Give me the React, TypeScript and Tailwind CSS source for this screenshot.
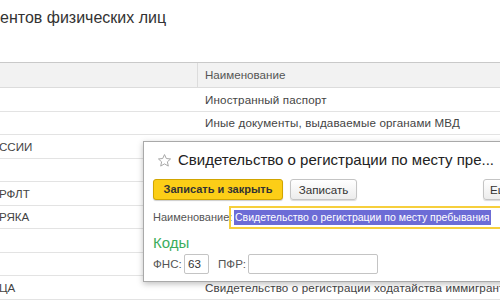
import React from 'react';

const rows = [
  { left: '', right: 'Иностранный паспорт' },
  { left: '', right: 'Иные документы, выдаваемые органами МВД' },
  { left: 'ССИИ', right: '' },
  { left: '', right: '' },
  { left: 'РФЛТ', right: '' },
  { left: 'РЯКА', right: '' },
  { left: '', right: '' },
  { left: '', right: '' },
  { left: 'ЦА', right: 'Свидетельство о регистрации ходатайства иммигранта о при' },
];

const Star = () => (
  <svg width="15" height="15" viewBox="0 0 24 24" fill="none" stroke="#a8a8a8" strokeWidth="1.6" strokeLinejoin="round">
    <path d="M12 2.5l2.9 6.3 6.8.7-5.1 4.6 1.5 6.8L12 17.4l-6.1 3.5 1.5-6.8-5.1-4.6 6.8-.7z" />
  </svg>
);

const App = () => {
  return (
    <div className="relative w-[500px] h-[300px] overflow-hidden bg-white font-['Liberation_Sans',Arial,sans-serif] text-[#333]">
      <h1 className="h-[62px] pt-[8px] text-[16px] leading-[20px] whitespace-nowrap">ентов физических лиц</h1>

      <div className="border-t border-[#c9c9c9]">
        <div className="flex h-[25px] items-center bg-[#f2f2f2] border-b border-[#dcdcdc] text-[11.6px] text-[#555]">
          <div className="w-[198px] shrink-0 h-full border-r border-[#dcdcdc]" />
          <div className="pl-[7px]">Наименование</div>
        </div>
        {rows.map((r, i) => (
          <div key={i} className="flex h-[23.5px] items-center border-b border-[#e3e3e3] text-[11.6px] text-[#444]">
            <span className="w-[198px] shrink-0 -ml-[1px] whitespace-nowrap">{r.left}</span>
            <span className="pl-[8px] shrink-0 whitespace-nowrap tracking-[0.15px]">{r.right}</span>
          </div>
        ))}
      </div>

      <div className="absolute left-[143px] top-[141px] w-[420px] h-[141px] bg-white border border-[#a9a9a9] shadow-[0_2px_6px_rgba(0,0,0,0.25)] px-[9px]">
        <div className="flex items-center h-[37px] gap-[6px] pl-[4px]">
          <Star />
          <span className="text-[15px] text-[#222] whitespace-nowrap">Свидетельство о регистрации по месту пре...</span>
        </div>
        <div className="flex h-[21px] text-[11.6px] text-[#333]">
          <button className="w-[130px] shrink-0 h-[21px] rounded-[3px] bg-[#fcce17] border border-[#d1a500] font-bold text-[11px] shadow-[0_1px_1px_rgba(0,0,0,0.2)]">Записать и закрыть</button>
          <button className="w-[67px] shrink-0 ml-[7px] h-[21px] rounded-[3px] bg-gradient-to-b from-white to-[#ececec] border border-[#c4c4c4] shadow-[0_1px_1px_rgba(0,0,0,0.15)]">Записать</button>
          <button className="w-[60px] shrink-0 ml-[126px] h-[21px] rounded-[3px] bg-gradient-to-b from-white to-[#ececec] border border-[#c4c4c4] text-left pl-[6px] shadow-[0_1px_1px_rgba(0,0,0,0.15)]">Еще</button>
        </div>
        <div className="flex items-center mt-[6px] h-[23px] text-[11px]">
          <span className="text-[#555] w-[76px] shrink-0 whitespace-nowrap">Наименование:</span>
          <div className="flex-1 h-[23px] border-2 border-[#f6cf3c] flex items-center pl-[3px] whitespace-nowrap">
            <span className="bg-[#6c6cd6] text-white text-[10.5px] leading-[15px] px-[1px]">Свидетельство о регистрации по месту пребывания</span>
          </div>
        </div>
        <div className="mt-[5px] text-[15px] leading-[18px] text-[#3aad5c]">Коды</div>
        <div className="flex items-center mt-[2px] h-[20px] text-[11.6px] text-[#555]">
          <span className="w-[31px] shrink-0">ФНС:</span>
          <div className="w-[25px] shrink-0 h-[20px] border border-[#c4c4c4] rounded-[2px] pl-[3px] leading-[18px] text-[#333]">63</div>
          <span className="ml-[9px] w-[30px] shrink-0">ПФР:</span>
          <div className="w-[130px] shrink-0 h-[20px] border border-[#c4c4c4] rounded-[2px]" />
        </div>
      </div>
    </div>
  );
};

export default App;
